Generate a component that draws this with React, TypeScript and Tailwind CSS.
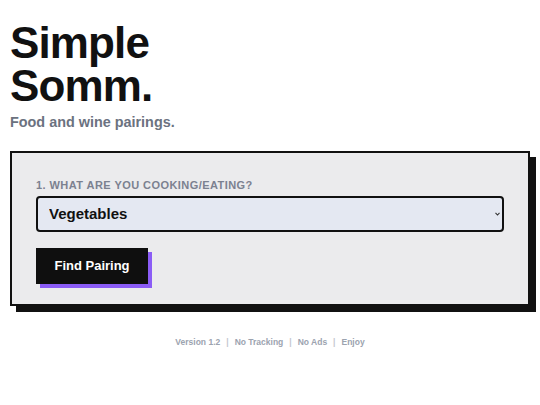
import React from "react";

export default function App() {
  return (
    <div className="min-h-[405px] bg-white px-[10px] pt-[21px] text-[#111111]" style={{ fontFamily: '"Liberation Sans", Arial, sans-serif' }}>
      <h1 className="text-[44px] font-bold leading-[43px] tracking-[-0.02em] text-[#111111]">
        <span className="block">Simple</span>
        <span className="block">Somm.</span>
      </h1>
      <p className="mt-[5px] text-[14.4px] font-bold leading-[20px] text-[#6b7280]">Food and wine pairings.</p>

      <div className="mt-[19px] w-[520px] border-2 border-[#111111] bg-[#ebebed] px-6 pt-6 pb-5 shadow-[6px_6px_0_#111111]">
        <label className="mb-[3px] block text-[11px] font-bold uppercase leading-4 tracking-[0.04em] text-[#7b8190]">
          1. What are you cooking/eating?
        </label>
        <div className="relative">
          <select
            defaultValue="Vegetables"
            className="block h-[36px] w-full appearance-none rounded-[4px] border-2 border-[#111111] bg-[#e4e8f2] pl-[11px] pr-4 text-[15px] font-bold text-[#111111] outline-none"
            style={{ fontFamily: '"Liberation Sans", Arial, sans-serif' }}
          >
            <option>Vegetables</option>
            <option>Beef</option>
            <option>Chicken</option>
            <option>Fish</option>
          </select>
          <svg className="pointer-events-none absolute right-[4px] top-[16px]" width="5" height="4" viewBox="0 0 5 4">
            <path d="M0.5 0.8 L2.5 3 L4.5 0.8" fill="none" stroke="#333" strokeWidth="1.1" />
          </svg>
        </div>
        <button className="mt-4 h-[36px] w-[112px] bg-[#0f0f0f] text-[13px] font-bold text-white shadow-[4px_4px_0_#8b5cf6]">
          Find Pairing
        </button>
      </div>

      <div className="mt-[30px] flex justify-center text-[8.5px] font-bold leading-3 text-[#9ca3af]">
        <span>Version 1.2</span>
        <span className="mx-[6px] text-[#c4c8d0]">|</span>
        <span>No Tracking</span>
        <span className="mx-[6px] text-[#c4c8d0]">|</span>
        <span>No Ads</span>
        <span className="mx-[6px] text-[#c4c8d0]">|</span>
        <span>Enjoy</span>
      </div>
    </div>
  );
}
